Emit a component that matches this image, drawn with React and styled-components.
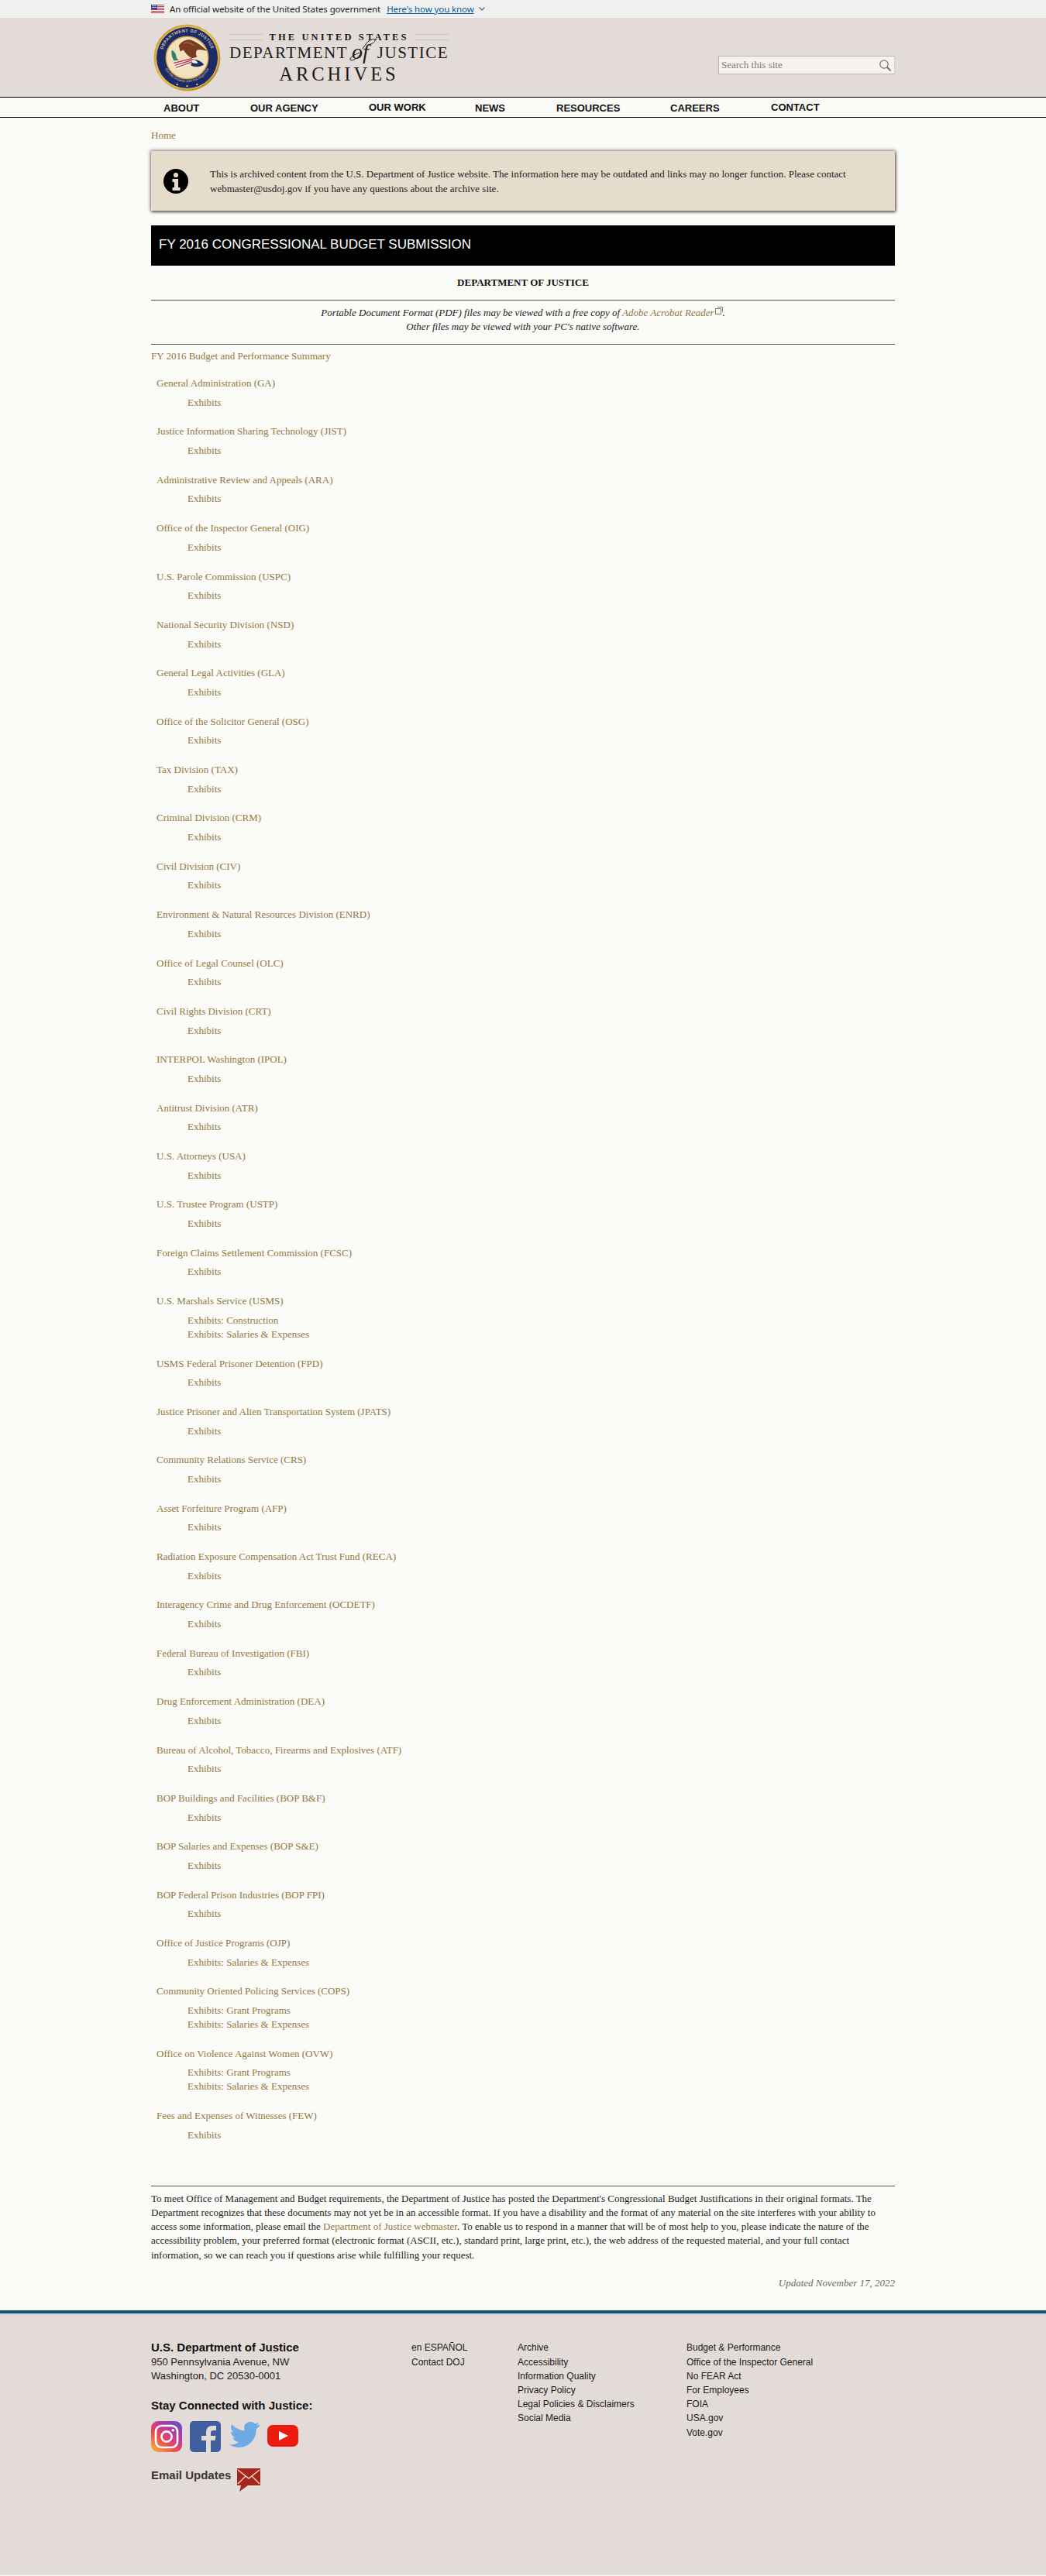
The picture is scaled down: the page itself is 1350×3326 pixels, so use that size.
import React from 'react';
import styled, { createGlobalStyle } from 'styled-components';

const GlobalStyle = createGlobalStyle`
  html, body { margin: 0; padding: 0; background: #fbfbf7; }
  body { font-family: "Liberation Serif", "Times New Roman", serif; font-size: 13px; color: #222; }
  a { text-decoration: none; }
`;

const SANS = '"Liberation Sans", Arial, sans-serif';
const LINK = '#92793f';

const Wrap = styled.div`
  width: 960px;
  margin: 0 auto;
`;

const GovBanner = styled.div`
  height: 23px;
  background: #f0f0f0;
  border-bottom: 1px solid #f6f1ee;
  box-sizing: border-box;
  font-family: "Noto Sans", "Open Sans", sans-serif;
  font-size: 11.5px;
  color: #1b1b1b;
`;

const GovInner = styled(Wrap)`
  display: flex;
  align-items: center;
  height: 22px;
  letter-spacing: -0.1px;
`;

const FlagIcon = styled.svg`
  width: 17px;
  height: 11px;
  margin-right: 7px;
`;

const HowLink = styled.a`
  color: #005ea2;
  text-decoration: underline;
  margin-left: 8px;
`;

const Chevron = styled.svg`
  width: 10px;
  height: 10px;
  margin-left: 5px;
`;

const Masthead = styled.header`
  height: 102px;
  background: #e2dbd8;
`;

const MastInner = styled(Wrap)`
  display: flex;
  justify-content: space-between;
  height: 100%;
`;

const Brand = styled.div`
  display: flex;
  align-items: flex-start;
  padding: 8px 0 0 3px;
  gap: 11px;
`;

const SealSvg = styled.svg`
  width: 87px;
  height: 87px;
  flex: none;
`;

const Wordmark = styled.div`
  width: 283px;
  color: #1c1a18;
  text-align: center;
  padding-top: 9.5px;
`;

const WordTop = styled.div`
  display: flex;
  align-items: center;
  gap: 8px;
  font-size: 12.5px;
  line-height: 14px;
  letter-spacing: 3.1px;
  font-weight: bold;
  white-space: nowrap;
  &::before, &::after {
    content: '';
    flex: 1;
    height: 6px;
    border-top: 1px solid #c9c2bd;
    border-bottom: 1px solid #c9c2bd;
  }
`;

const WordMain = styled.div`
  position: relative;
  font-size: 21px;
  line-height: 26px;
  letter-spacing: 1.5px;
  white-space: nowrap;
  display: flex;
  justify-content: space-between;
  margin-top: 0.5px;
`;

const WordOf = styled.span`
  position: absolute;
  left: 158px;
  top: -6px;
  font-size: 28px;
  line-height: 36px;
  font-style: italic;
  letter-spacing: 0;
`;

const OfSwash = styled.svg`
  position: absolute;
  left: 154px;
  top: -10px;
  width: 36px;
  height: 38px;
`;

const WordArchives = styled.div`
  font-size: 24.5px;
  line-height: 28px;
  letter-spacing: 4px;
  margin-top: 1px;
`;

const SearchBox = styled.div`
  align-self: flex-start;
  margin-top: 49px;
  width: 228px;
  height: 24px;
  box-sizing: border-box;
  background: #f6f3ef;
  border: 1px solid #bdb6b0;
  border-right-color: #d6d0cb;
  display: flex;
  align-items: center;
  justify-content: space-between;
  padding: 0 3px;
  font-size: 13px;
  color: #7f7a72;
`;

const NavBar = styled.nav`
  height: 27px;
  box-sizing: border-box;
  background: #fafaf6;
  border-top: 1px solid #000;
  border-bottom: 1px solid #000;
`;

const NavInner = styled(Wrap)`
  display: flex;
  height: 100%;
`;

const NavItem = styled.a`
  width: ${p => p.$w}px;
  padding-left: ${p => p.$pad}px;
  padding-top: ${p => (p.$up ? 5 : 6)}px;
  box-sizing: border-box;
  font-family: ${SANS};
  font-size: 13px;
  font-weight: bold;
  line-height: 15px;
  color: #111;
  white-space: nowrap;
`;

const Crumb = styled.div`
  margin-top: 15px;
  line-height: 15px;
  font-size: 13px;
`;

const Link = styled.a`
  color: ${LINK};
`;

const Notice = styled.div`
  margin-top: 13px;
  height: 77px;
  box-sizing: border-box;
  background: #e6dccc;
  box-shadow: 0 0 4px 1px rgba(40, 35, 30, 0.55), 1px 2px 3px rgba(40, 35, 30, 0.5);
  display: flex;
  align-items: center;
  padding-left: 16px;
  line-height: 19px;
  font-size: 13px;
  color: #222;
`;

const NoticeIcon = styled.svg`
  width: 32px;
  height: 32px;
  flex: none;
  margin-right: 28px;
`;

const TitleBar = styled.h1`
  margin: 19px 0 0;
  height: 52px;
  background: #000;
  color: #fff;
  font-family: ${SANS};
  font-size: 17px;
  font-weight: normal;
  line-height: 50px;
  padding-left: 10px;
`;

const DeptHead = styled.h2`
  margin: 13px 0 0;
  text-align: center;
  font-size: 13px;
  line-height: 17px;
  color: #111;
`;

const Rule = styled.hr`
  margin: ${p => p.$top || 0}px 0 0;
  border: 0;
  border-top: 1px solid #55534e;
  height: 0;
`;

const PdfNote = styled.p`
  margin: 7px 0 0;
  text-align: center;
  font-style: italic;
  font-size: 13px;
  line-height: 18px;
  color: #222;
`;

const ExternalMark = styled.svg`
  width: 10px;
  height: 10px;
  vertical-align: 2px;
  margin-left: 1px;
`;

const Summary = styled.div`
  margin-top: 6px;
  line-height: 18px;
`;

const BudgetList = styled.ul`
  list-style: none;
  margin: 0;
  padding: 0 0 0 7px;
`;

const BudgetItem = styled.li`
  margin-top: 19.7px;
  line-height: 18px;
  &:first-child { margin-top: 17px; }
`;

const ExhibitRow = styled.div`
  padding-left: 40px;
  line-height: 18px;
  &:first-of-type { margin-top: 6.7px; }
`;

const Para = styled.p`
  margin: 7px 0 0;
  line-height: 18.2px;
  font-size: 13px;
  color: #222;
`;

const Updated = styled.div`
  margin-top: 18px;
  text-align: right;
  font-style: italic;
  color: #6b6b66;
  line-height: 18px;
`;

const Footer = styled.footer`
  margin-top: 26px;
  height: 342px;
  box-sizing: border-box;
  background: #e2dbd8;
  border-top: 4px solid #16517a;
  box-shadow: inset 0 2px 0 #d6d4d0;
  font-family: ${SANS};
  font-size: 12px;
  color: #1a1a1a;
`;

const FooterInner = styled(Wrap)`
  display: grid;
  grid-template-columns: 336px 137px 218px 1fr;
  padding-top: 35px;
`;

const FootCol = styled.div`
  display: flex;
  flex-direction: column;
`;

const FootLine = styled.a`
  line-height: 18px;
  color: #1a1a1a;
  &:first-child { margin-bottom: 1px; }
  &:nth-child(7) { margin-top: 1px; }
`;

const Address = styled.div`
  font-size: 13px;
  line-height: 18px;
`;

const FootStrong = styled.div`
  font-size: 15px;
  font-weight: bold;
  line-height: 18px;
  margin-bottom: 1px;
  color: #111;
`;

const StayHead = styled(FootStrong)`
  margin: 20px 0 0;
`;

const SocialRow = styled.div`
  display: flex;
  gap: 10px;
  margin-top: 11px;
`;

const SocialIcon = styled.svg`
  width: 40px;
  height: 40px;
  display: block;
`;

const EmailRow = styled.div`
  display: flex;
  align-items: flex-start;
  margin-top: 21px;
  font-size: 15px;
  font-weight: bold;
  line-height: 18px;
  color: #3a3533;
  gap: 8px;
`;

const EmailIcon = styled.svg`
  width: 30px;
  height: 30px;
`;

const Flag = () => (
  <FlagIcon viewBox="0 0 17 11">
    <rect width="17" height="11" fill="#fff" />
    {[0, 2, 4, 6, 8, 10].map(y => <rect key={y} y={y} width="17" height="1" fill="#c8313e" />)}
    <rect width="8" height="6" fill="#3c3b8e" />
    <rect x="1" y="1" width="6" height="1" fill="#c9c9e6" />
    <rect x="1" y="3" width="6" height="1" fill="#c9c9e6" />
  </FlagIcon>
);

const Seal = () => (
  <SealSvg viewBox="0 0 88 88">
    <defs>
      <linearGradient id="rim" x1="0" y1="0" x2="1" y2="1">
        <stop offset="0" stopColor="#c9962c" />
        <stop offset="0.5" stopColor="#e5bb4c" />
        <stop offset="1" stopColor="#a9761c" />
      </linearGradient>
      <path id="sealArc" d="M10.5 44a33.5 33.5 0 0 1 67 0" />
      <path id="sealArcLow" d="M13 52a32 32 0 0 0 62 0" />
    </defs>
    <circle cx="44" cy="44" r="43.5" fill="url(#rim)" />
    <circle cx="44" cy="44" r="40.5" fill="#1c2a68" stroke="#e7c667" strokeWidth="1" />
    <circle cx="44" cy="44" r="27.5" fill="#f3e2c0" stroke="#d6aa48" strokeWidth="1.6" />
    <text fontFamily="Liberation Sans, sans-serif" fontSize="5.6" fontWeight="bold" fill="#d9c89a" letterSpacing="0.5">
      <textPath href="#sealArc" startOffset="50%" textAnchor="middle">DEPARTMENT OF JUSTICE</textPath>
    </text>
    <text fontFamily="Liberation Sans, sans-serif" fontSize="3.8" fill="#e2d5ae">
      <textPath href="#sealArcLow" startOffset="50%" textAnchor="middle">QUI PRO DOMINA JUSTITIA SEQUITUR</textPath>
    </text>
    <path d="M33 28c6-8 14-9 19-6 6 3 12 7 18 13-5-1-10-2-13-1-2 3-2 6 0 9l-7 2c-5-3-9-8-11-11l-4 2c-1-3-1-6-2-8z" fill="#7a3d22" />
    <path d="M40 25c5-2 9 0 13 3" fill="none" stroke="#a86a42" strokeWidth="1.4" />
    <path d="M26 50l24-6 2 7-21 8c-2-3-4-6-5-9z" fill="#fff" />
    <path d="M26.5 51l24-6M28 54l23-7M29.5 57l22-8" stroke="#c43a4d" strokeWidth="1.5" />
    <path d="M24 34c3 2 6 5 6 10l3 3-6 1c-3-4-4-9-3-14z" fill="#2f7f6d" />
    <path d="M50 46c6 0 12 2 16 7-5 3-12 4-17 1 1-3 1-5 1-8z" fill="#1e2d66" />
    <path d="M50 47c4-1 7 1 8 4-3 1-6 0-8-1z" fill="#f3f0e6" />
    <circle cx="31" cy="79" r="1.2" fill="#e7c667" />
    <circle cx="44" cy="81" r="1.2" fill="#e7c667" />
    <circle cx="57" cy="79" r="1.2" fill="#e7c667" />
  </SealSvg>
);

const SearchGlass = () => (
  <svg width="17" height="17" viewBox="0 0 17 17" fill="none" stroke="#6e7069">
    <circle cx="7" cy="7" r="5.2" strokeWidth="1.2" />
    <path d="M10.800 10.800l4.800 4.600" strokeWidth="2" />
  </svg>
);

const InfoCircle = () => (
  <NoticeIcon viewBox="0 0 32 32">
    <circle cx="16" cy="16" r="16" fill="#000" />
    <circle cx="16" cy="8" r="3.1" fill="#e6dccc" />
    <path d="M11.5 13h7.5v11h2.500v4h-10v-4H14v-7h-2.500z" fill="#e6dccc" />
  </NoticeIcon>
);

const Instagram = () => (
  <SocialIcon viewBox="0 0 40 40">
    <defs>
      <linearGradient id="ig" x1="0.1" y1="1" x2="0.9" y2="0">
        <stop offset="0" stopColor="#f9b13a" />
        <stop offset="0.35" stopColor="#ee4e4c" />
        <stop offset="0.65" stopColor="#c2379d" />
        <stop offset="1" stopColor="#5a53c8" />
      </linearGradient>
    </defs>
    <rect width="40" height="40" rx="9" fill="url(#ig)" />
    <rect x="6" y="6" width="28" height="28" rx="7.5" fill="none" stroke="#fff" strokeWidth="2.6" />
    <circle cx="20" cy="20" r="6.6" fill="none" stroke="#fff" strokeWidth="2.6" />
    <circle cx="28.3" cy="11.7" r="1.8" fill="#fff" />
  </SocialIcon>
);

const Facebook = () => (
  <SocialIcon viewBox="0 0 40 40">
    <rect width="40" height="40" rx="5" fill="#3f5f9e" />
    <path d="M21 40V25h-6v-6h6v-4c0-6 3-9 8-9h5v6h-3c-3 0-4 1-4 3v4h6.500l-1 6H27v15z" fill="#e2dbd8" />
  </SocialIcon>
);

const Twitter = () => (
  <SocialIcon viewBox="0 0 40 40">
    <path d="M40 4.600c-1.400.7-3 1.100-4.500 1.300 1.600-1 2.800-2.500 3.400-4.400-1.500.9-3.200 1.600-5 1.900A7.900 7.900 0 0 0 20.400 10.500c0 .6.100 1.200.2 1.800C14 12 8.200 8.800 4.300 4 2.200 7.600 3.200 12.200 6.700 14.500c-1.300 0-2.500-.4-3.600-1 0 3.800 2.700 7 6.300 7.800-1.200.3-2.400.4-3.600.1 1 3.200 3.900 5.400 7.400 5.500A16 16 0 0 1 1 30.200 22.500 22.500 0 0 0 13.200 34c14.700 0 23-12.500 22.500-23.700 1.700-1.100 3.100-2.600 4.300-4.300z" fill="#6fa9e6" />
  </SocialIcon>
);

const YouTube = () => (
  <SocialIcon viewBox="0 0 40 40">
    <rect y="5" width="40" height="28" rx="7" fill="#ee1c10" />
    <path d="M15 13l12 6-12 6z" fill="#fff" />
  </SocialIcon>
);

const MailBubble = () => (
  <EmailIcon viewBox="0 0 30 30">
    <path d="M0 0h30v22H14L3 30l2-8H0z" fill="#a5261c" />
    <path d="M1 2l14 11L29 2M1 20l10-10M29 20L19 10" fill="none" stroke="#f6d9cf" strokeWidth="1.4" />
  </EmailIcon>
);

const NAV = [
  { label: 'ABOUT', w: 128, pad: 16 },
  { label: 'OUR AGENCY', w: 153, pad: 0 },
  { label: 'OUR WORK', w: 137, pad: 0, up: true },
  { label: 'NEWS', w: 105, pad: 0 },
  { label: 'RESOURCES', w: 147, pad: 0 },
  { label: 'CAREERS', w: 130, pad: 0 },
  { label: 'CONTACT', w: 100, pad: 0, up: true },
];

const EX = ['Exhibits'];
const SAL = ['Exhibits: Salaries & Expenses'];
const GRANT = ['Exhibits: Grant Programs', 'Exhibits: Salaries & Expenses'];

const BUDGET = [
  ['General Administration (GA)', EX],
  ['Justice Information Sharing Technology (JIST)', EX],
  ['Administrative Review and Appeals (ARA)', EX],
  ['Office of the Inspector General (OIG)', EX],
  ['U.S. Parole Commission (USPC)', EX],
  ['National Security Division (NSD)', EX],
  ['General Legal Activities (GLA)', EX],
  ['Office of the Solicitor General (OSG)', EX],
  ['Tax Division (TAX)', EX],
  ['Criminal Division (CRM)', EX],
  ['Civil Division (CIV)', EX],
  ['Environment & Natural Resources Division (ENRD)', EX],
  ['Office of Legal Counsel (OLC)', EX],
  ['Civil Rights Division (CRT)', EX],
  ['INTERPOL Washington (IPOL)', EX],
  ['Antitrust Division (ATR)', EX],
  ['U.S. Attorneys (USA)', EX],
  ['U.S. Trustee Program (USTP)', EX],
  ['Foreign Claims Settlement Commission (FCSC)', EX],
  ['U.S. Marshals Service (USMS)', ['Exhibits: Construction', 'Exhibits: Salaries & Expenses']],
  ['USMS Federal Prisoner Detention (FPD)', EX],
  ['Justice Prisoner and Alien Transportation System (JPATS)', EX],
  ['Community Relations Service (CRS)', EX],
  ['Asset Forfeiture Program (AFP)', EX],
  ['Radiation Exposure Compensation Act Trust Fund (RECA)', EX],
  ['Interagency Crime and Drug Enforcement (OCDETF)', EX],
  ['Federal Bureau of Investigation (FBI)', EX],
  ['Drug Enforcement Administration (DEA)', EX],
  ['Bureau of Alcohol, Tobacco, Firearms and Explosives (ATF)', EX],
  ['BOP Buildings and Facilities (BOP B&F)', EX],
  ['BOP Salaries and Expenses (BOP S&E)', EX],
  ['BOP Federal Prison Industries (BOP FPI)', EX],
  ['Office of Justice Programs (OJP)', SAL],
  ['Community Oriented Policing Services (COPS)', GRANT],
  ['Office on Violence Against Women (OVW)', GRANT],
  ['Fees and Expenses of Witnesses (FEW)', EX],
];

const FOOT_A = ['en ESPAÑOL', 'Contact DOJ'];
const FOOT_B = ['Archive', 'Accessibility', 'Information Quality', 'Privacy Policy', 'Legal Policies & Disclaimers', 'Social Media'];
const FOOT_C = ['Budget & Performance', 'Office of the Inspector General', 'No FEAR Act', 'For Employees', 'FOIA', 'USA.gov', 'Vote.gov'];

const App = () => (
  <>
    <GlobalStyle />
    <GovBanner>
      <GovInner>
        <Flag />
        An official website of the United States government
        <HowLink href="#">Here's how you know</HowLink>
        <Chevron viewBox="0 0 10 10" fill="none" stroke="#71767a" strokeWidth="1.5">
          <path d="M1.500 3.500L5 7l3.500-3.500" />
        </Chevron>
      </GovInner>
    </GovBanner>
    <Masthead>
      <MastInner>
        <Brand>
          <Seal />
          <Wordmark>
            <WordTop>THE UNITED STATES</WordTop>
            <WordMain>
              <span>DEPARTMENT</span>
              <OfSwash viewBox="0 0 36 38" fill="none" stroke="#1c1a18" strokeWidth="1">
                <path d="M18 18C24 8 30 4 34 6c1 2-2 5-8 7M16 24c-4 6-12 11-14 8-1-3 5-6 12-9" />
              </OfSwash>
              <WordOf>of</WordOf>
              <span>JUSTICE</span>
            </WordMain>
            <WordArchives>ARCHIVES</WordArchives>
          </Wordmark>
        </Brand>
        <SearchBox>
          Search this site
          <SearchGlass />
        </SearchBox>
      </MastInner>
    </Masthead>
    <NavBar>
      <NavInner>
        {NAV.map(n => (
          <NavItem key={n.label} href="#" $w={n.w} $pad={n.pad} $up={n.up}>{n.label}</NavItem>
        ))}
      </NavInner>
    </NavBar>
    <Wrap>
      <Crumb><Link href="#">Home</Link></Crumb>
      <Notice>
        <InfoCircle />
        <div>
          This is archived content from the U.S. Department of Justice website. The information here may be outdated and links may no longer function. Please contact<br />
          webmaster@usdoj.gov if you have any questions about the archive site.
        </div>
      </Notice>
      <TitleBar>FY 2016 CONGRESSIONAL BUDGET SUBMISSION</TitleBar>
      <DeptHead>DEPARTMENT OF JUSTICE</DeptHead>
      <Rule $top={14} />
      <PdfNote>
        Portable Document Format (PDF) files may be viewed with a free copy of <Link href="#">Adobe Acrobat Reader</Link>
        <ExternalMark viewBox="0 0 10 10" fill="none" stroke="#8a7a55">
          <rect x="0.5" y="2.5" width="7" height="7" />
          <path d="M3 0.500h6.500v6" />
        </ExternalMark>.<br />
        Other files may be viewed with your PC's native software.
      </PdfNote>
      <Rule $top={13} />
      <Summary><Link href="#">FY 2016 Budget and Performance Summary</Link></Summary>
      <BudgetList>
        {BUDGET.map(([name, rows]) => (
          <BudgetItem key={name}>
            <Link href="#">{name}</Link>
            {rows.map(r => (
              <ExhibitRow key={r}><Link href="#">{r}</Link></ExhibitRow>
            ))}
          </BudgetItem>
        ))}
      </BudgetList>
      <Rule $top={56} />
      <Para>
        To meet Office of Management and Budget requirements, the Department of Justice has posted the Department's Congressional Budget Justifications in their original formats. The Department recognizes that these documents may not yet be in an accessible format. If you have a disability and the format of any material on the site interferes with your ability to access some information, please email the <Link href="#">Department of Justice webmaster</Link>. To enable us to respond in a manner that will be of most help to you, please indicate the nature of the accessibility problem, your preferred format (electronic format (ASCII, etc.), standard print, large print, etc.), the web address of the requested material, and your full contact information, so we can reach you if questions arise while fulfilling your request.
      </Para>
      <Updated>Updated November 17, 2022</Updated>
    </Wrap>
    <Footer>
      <FooterInner>
        <FootCol>
          <FootStrong>U.S. Department of Justice</FootStrong>
          <Address>950 Pennsylvania Avenue, NW</Address>
          <Address>Washington, DC 20530-0001</Address>
          <StayHead>Stay Connected with Justice:</StayHead>
          <SocialRow>
            <Instagram />
            <Facebook />
            <Twitter />
            <YouTube />
          </SocialRow>
          <EmailRow>
            Email Updates
            <MailBubble />
          </EmailRow>
        </FootCol>
        {[FOOT_A, FOOT_B, FOOT_C].map(col => (
          <FootCol key={col[0]}>
            {col.map(t => <FootLine key={t} href="#">{t}</FootLine>)}
          </FootCol>
        ))}
      </FooterInner>
    </Footer>
  </>
);

export default App;
